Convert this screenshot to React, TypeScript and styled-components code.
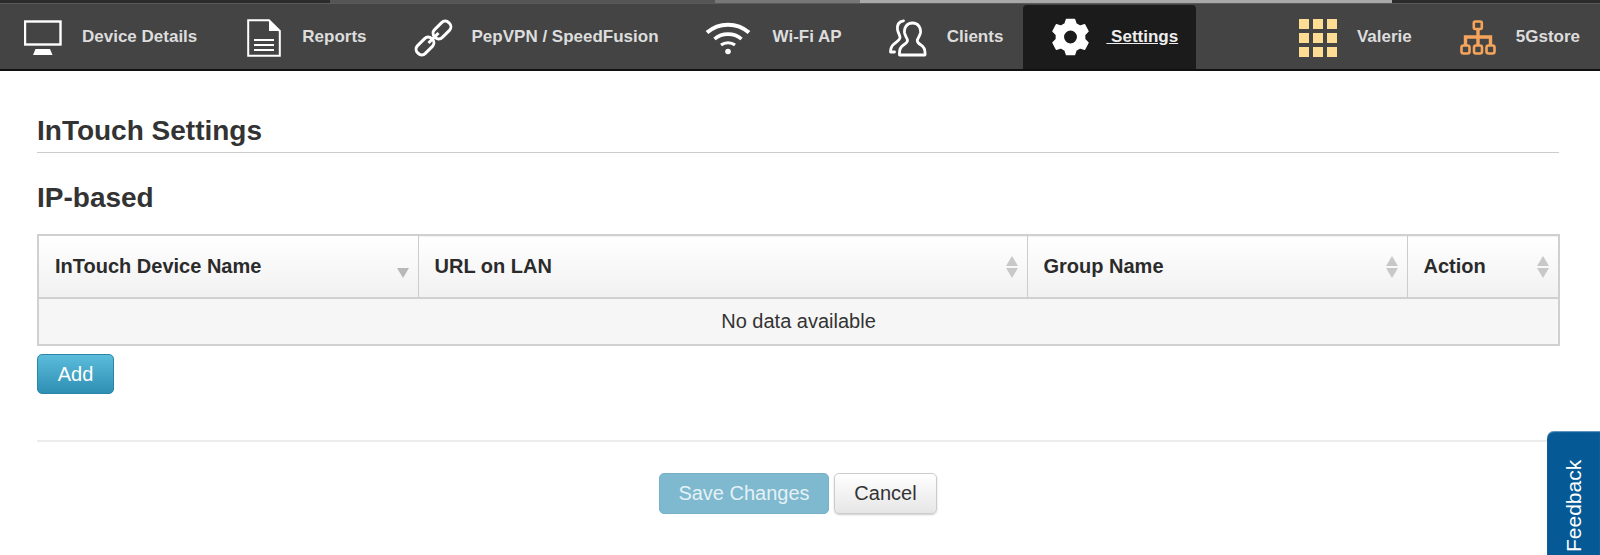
import React, { FC } from 'react'
import styled, { createGlobalStyle } from 'styled-components'

const GlobalStyle = createGlobalStyle`
  html, body {
    margin: 0;
    padding: 0;
    height: 100%;
    overflow: hidden;
    background: #fff;
  }
  body {
    font-family: "Liberation Sans", Arial, sans-serif;
    color: #333;
  }
`

const MonitorIcon: FC = () => (
  <svg width="38" height="36" viewBox="0 0 38 36">
    <rect x="1" y="1.5" width="35.5" height="23" fill="none" stroke="#fff" strokeWidth="2.4" />
    <path d="M11.5 29 H26 L28.5 35 H9 Z" fill="#fff" />
  </svg>
)

const ReportIcon: FC = () => (
  <svg width="34" height="38" viewBox="0 0 34 38">
    <path d="M1.2 1.2 H22 L32.8 12 V36.8 H1.2 Z" fill="none" stroke="#fff" strokeWidth="2" />
    <path d="M22 1 V12 H33 Z" fill="#fff" />
    <path d="M7 21 H27 M7 26 H27 M7 31 H27" stroke="#fff" strokeWidth="2.2" />
  </svg>
)

const LinkIcon: FC = () => (
  <svg width="39" height="38" viewBox="0 0 39 38" fill="none" stroke="#fff" strokeWidth="3">
    <rect x="-10" y="-5.5" width="20" height="11" rx="5" transform="translate(11 27) rotate(-45)" />
    <rect x="-10" y="-5.5" width="20" height="11" rx="5" transform="translate(28 11) rotate(-45)" />
    <path d="M14.5 24 L24.5 14" strokeWidth="3" />
  </svg>
)

const WifiIcon: FC = () => (
  <svg width="46" height="34" viewBox="0 0 46 34" fill="none" stroke="#fff" strokeLinecap="butt">
    <path d="M2 11.5 C14 1 32 1 44 11.5" strokeWidth="4" />
    <path d="M9.5 18 C17 11.5 29 11.5 36.5 18" strokeWidth="3.6" />
    <path d="M16 24 C20 21 26 21 30 24" strokeWidth="3.2" />
    <circle cx="23" cy="30.5" r="2.8" fill="#fff" stroke="none" />
  </svg>
)

const ClientsIcon: FC = () => (
  <svg width="38" height="38" viewBox="0 0 38 38" fill="none" stroke="#fff" strokeWidth="2.8" strokeLinejoin="round" strokeLinecap="round">
    <path d="M23.5 4 C17.5 4 15 9 15.5 13.5 C16 17 18 19 18.5 21 C18.7 23 17 24.5 14.5 26 C11.5 27.8 10 30 10.5 36 H36 C36.5 30 35 27.8 32 26 C29.5 24.5 28 23 28.3 21 C29 19 31 17 31.5 13.5 C32 9 29.5 4 23.5 4 Z" />
    <path d="M14.5 1.8 C10 2.5 8 6 8.5 10.5 C9 14 11 16 11 18.5 C11 21 8 22.5 5 25 C2.5 27 1.5 30 1.5 33 H5.5" />
  </svg>
)

const GearIcon: FC = () => (
  <svg width="37" height="38" viewBox="0 0 37 38">
    <path
      fill="#fff"
      stroke="#fff"
      strokeWidth="1.5"
      strokeLinejoin="round"
      fillRule="evenodd"
      d="M14.5 1.5 H22.5 L24 6 L28 8.2 L32.6 6.8 L36 13.3 L32.6 16.8 V21.2 L36 24.7 L32.6 31.2 L28 29.8 L24 32 L22.5 36.5 H14.5 L13 32 L9 29.8 L4.4 31.2 L1 24.7 L4.4 21.2 V16.8 L1 13.3 L4.4 6.8 L9 8.2 L13 6 Z M18.5 11.8 A7.2 7.2 0 1 0 18.5 26.2 A7.2 7.2 0 1 0 18.5 11.8 Z"
    />
  </svg>
)

const GridIcon: FC = () => (
  <svg width="38" height="38" viewBox="0 0 38 38" fill="#fddc93">
    {[0, 14, 28].map((y) =>
      [0, 14, 28].map((x) => <rect key={`${x}-${y}`} x={x} y={y} width="10" height="10" />),
    )}
  </svg>
)

const OrgIcon: FC = () => (
  <svg width="36" height="35" viewBox="0 0 36 35" fill="none" stroke="#f5a55b" strokeWidth="2.6">
    <rect x="13.8" y="1.5" width="8" height="7.5" rx="1.5" />
    <rect x="1.5" y="25.5" width="8" height="8" rx="2" />
    <rect x="14" y="25.5" width="8" height="8" rx="2" />
    <rect x="26.5" y="25.5" width="8" height="8" rx="2" />
    <path d="M18 9 V25 M5.5 25 V17 H30.5 V25" strokeWidth="3.4" />
  </svg>
)

const App: FC = () => (
  <>
    <GlobalStyle />
    <TopStrip>
      <StripPiece $width={330} $color="#2b2b2b" />
      <StripPiece $width={385} $color="#555" />
      <StripPiece $width={145} $color="#777" />
      <StripPiece $width={532} $color="#a9a9a9" />
      <StripPiece $width={208} $color="#2b2b2b" />
    </TopStrip>
    <Nav>
      <NavItem>
        <MonitorIcon />
        <NavLabel>Device Details</NavLabel>
      </NavItem>
      <NavItem $left={26} $right={23} $gap={21}>
        <ReportIcon />
        <NavLabel>Reports</NavLabel>
      </NavItem>
      <NavItem $gap={19}>
        <LinkIcon />
        <NavLabel>PepVPN / SpeedFusion</NavLabel>
      </NavItem>
      <NavItem $left={22} $gap={22}>
        <WifiIcon />
        <NavLabel>Wi-Fi AP</NavLabel>
      </NavItem>
      <NavItem $left={23}>
        <ClientsIcon />
        <NavLabel>Clients</NavLabel>
      </NavItem>
      <ActiveItem>
        <GearIcon />
        <ActiveLabel>&nbsp;Settings</ActiveLabel>
      </ActiveItem>
      <NavRight>
        <NavItem>
          <GridIcon />
          <NavLabel>Valerie</NavLabel>
        </NavItem>
        <NavItem>
          <OrgIcon />
          <NavLabel>5Gstore</NavLabel>
        </NavItem>
      </NavRight>
    </Nav>
    <Main>
      <PageTitle>InTouch Settings</PageTitle>
      <SectionTitle>IP-based</SectionTitle>
      <Table>
        <thead>
          <tr>
            <HeadCell $width={380}>
              <HeadInner>
                InTouch Device Name
                <SortDown />
              </HeadInner>
            </HeadCell>
            <HeadCell $width={609}>
              <HeadInner>
                URL on LAN
                <SortBoth />
              </HeadInner>
            </HeadCell>
            <HeadCell $width={380}>
              <HeadInner>
                Group Name
                <SortBoth />
              </HeadInner>
            </HeadCell>
            <HeadCell $width={152}>
              <HeadInner>
                Action
                <SortBoth />
              </HeadInner>
            </HeadCell>
          </tr>
        </thead>
        <tbody>
          <tr>
            <EmptyCell colSpan={4}>No data available</EmptyCell>
          </tr>
        </tbody>
      </Table>
      <AddButton>Add</AddButton>
      <Divider />
      <Actions>
        <SaveButton>Save Changes</SaveButton>
        <CancelButton>Cancel</CancelButton>
      </Actions>
    </Main>
    <FeedbackTab>
      <FeedbackText>Feedback</FeedbackText>
    </FeedbackTab>
  </>
)

export default App

const TopStrip = styled.div`
  display: flex;
  height: 3px;
`
const StripPiece = styled.div<{ $width: number; $color: string }>`
  width: ${({ $width }) => $width}px;
  background: ${({ $color }) => $color};
`
const Nav = styled.nav`
  display: flex;
  align-items: stretch;
  height: 68px;
  padding-top: 2px;
  box-sizing: border-box;
  background: #444;
  border-top: 1px solid #5a5a5a;
  border-bottom: 2px solid #111;
`
const NavItem = styled.div<{ $left?: number; $right?: number; $gap?: number }>`
  display: flex;
  align-items: center;
  gap: ${({ $gap = 20 }) => $gap}px;
  padding: 0 ${({ $right = 24 }) => $right}px 0 ${({ $left = 24 }) => $left}px;
`
const NavLabel = styled.span`
  padding-bottom: 1px;
  font-size: 17px;
  font-weight: bold;
  color: #ddd;
`
const ActiveItem = styled(NavItem)`
  padding: 0 18px 0 29px;
  margin: -1px 0 0 -4px;
  background: #1b1b1b;
  border-radius: 4px 4px 0 0;
  gap: 17px;
`
const ActiveLabel = styled(NavLabel)`
  text-decoration: underline;
  color: #eee;
`
const NavRight = styled.div`
  display: flex;
  margin-left: auto;
  margin-right: -4px;
`
const Main = styled.main`
  padding: 0 41px 0 37px;
`
const PageTitle = styled.h1`
  margin: 44px 0 0;
  padding-bottom: 5px;
  font-size: 28px;
  line-height: 32px;
  font-weight: bold;
  color: #333;
  border-bottom: 1px solid #ccc;
`
const SectionTitle = styled.h2`
  margin: 29px 0 0;
  font-size: 28px;
  line-height: 32px;
  font-weight: bold;
  color: #333;
`
const Table = styled.table`
  width: 1522px;
  margin-top: 20px;
  border-collapse: collapse;
  table-layout: fixed;
  border: 2px solid #d0d0d0;
`
const HeadCell = styled.th<{ $width: number }>`
  width: ${({ $width }) => $width}px;
  height: 63px;
  padding: 0 9px 0 16px;
  box-sizing: border-box;
  text-align: left;
  font-size: 20px;
  font-weight: bold;
  color: #2b2b2b;
  background: linear-gradient(#fff, #f1f1f1);
  border-right: 1px solid #ccc;
  border-bottom: 2px solid #d0d0d0;
`
const HeadInner = styled.div`
  display: flex;
  align-items: center;
  justify-content: space-between;
`
const SortBoth = styled.span`
  display: flex;
  flex-direction: column;
  gap: 2px;
  &::before,
  &::after {
    content: '';
    border-left: 6px solid transparent;
    border-right: 6px solid transparent;
  }
  &::before {
    border-bottom: 10px solid #c8c8c8;
  }
  &::after {
    border-top: 10px solid #c8c8c8;
  }
`
const SortDown = styled.span`
  margin-top: 12px;
  border-left: 6px solid transparent;
  border-right: 6px solid transparent;
  border-top: 10px solid #b8b8b8;
`
const EmptyCell = styled.td`
  height: 45px;
  padding: 0;
  text-align: center;
  font-size: 20px;
  color: #333;
  background: #f6f6f6;
`
const BaseButton = styled.button`
  height: 40px;
  box-sizing: border-box;
  font-family: inherit;
  font-size: 20px;
  border-radius: 5px;
  cursor: pointer;
`
const AddButton = styled(BaseButton)`
  display: block;
  width: 77px;
  margin-top: 8px;
  padding: 0;
  color: #fff;
  background: linear-gradient(#5bbcdc, #2f8fb3);
  border: 1px solid #2a85a6;
`
const Divider = styled.hr`
  margin: 46px 0 0;
  border: 0;
  border-top: 2px solid #ececec;
`
const Actions = styled.div`
  display: flex;
  justify-content: center;
  gap: 5px;
  margin-top: 31px;
`
const SaveButton = styled(BaseButton)`
  width: 170px;
  height: 41px;
  padding: 0;
  color: #e4f1f6;
  background: #7fb9cf;
  border: 1px solid #76b1c8;
`
const CancelButton = styled(BaseButton)`
  width: 103px;
  height: 41px;
  padding: 0;
  color: #333;
  background: linear-gradient(#fff, #e6e6e6);
  border: 1px solid #ccc;
  box-shadow: 0 1px 2px rgba(0, 0, 0, 0.2);
`
const FeedbackTab = styled.div`
  position: fixed;
  left: 1547px;
  right: 0;
  top: 431px;
  bottom: 0;
  display: flex;
  justify-content: center;
  padding-top: 27px;
  background: #055a96;
  border-radius: 7px 0 0 0;
  box-shadow: inset 0 1px 1px rgba(255, 255, 255, 0.4);
`
const FeedbackText = styled.span`
  height: 94px;
  font-size: 21px;
  line-height: 24px;
  color: #fff;
  writing-mode: vertical-rl;
  transform: rotate(180deg);
`
